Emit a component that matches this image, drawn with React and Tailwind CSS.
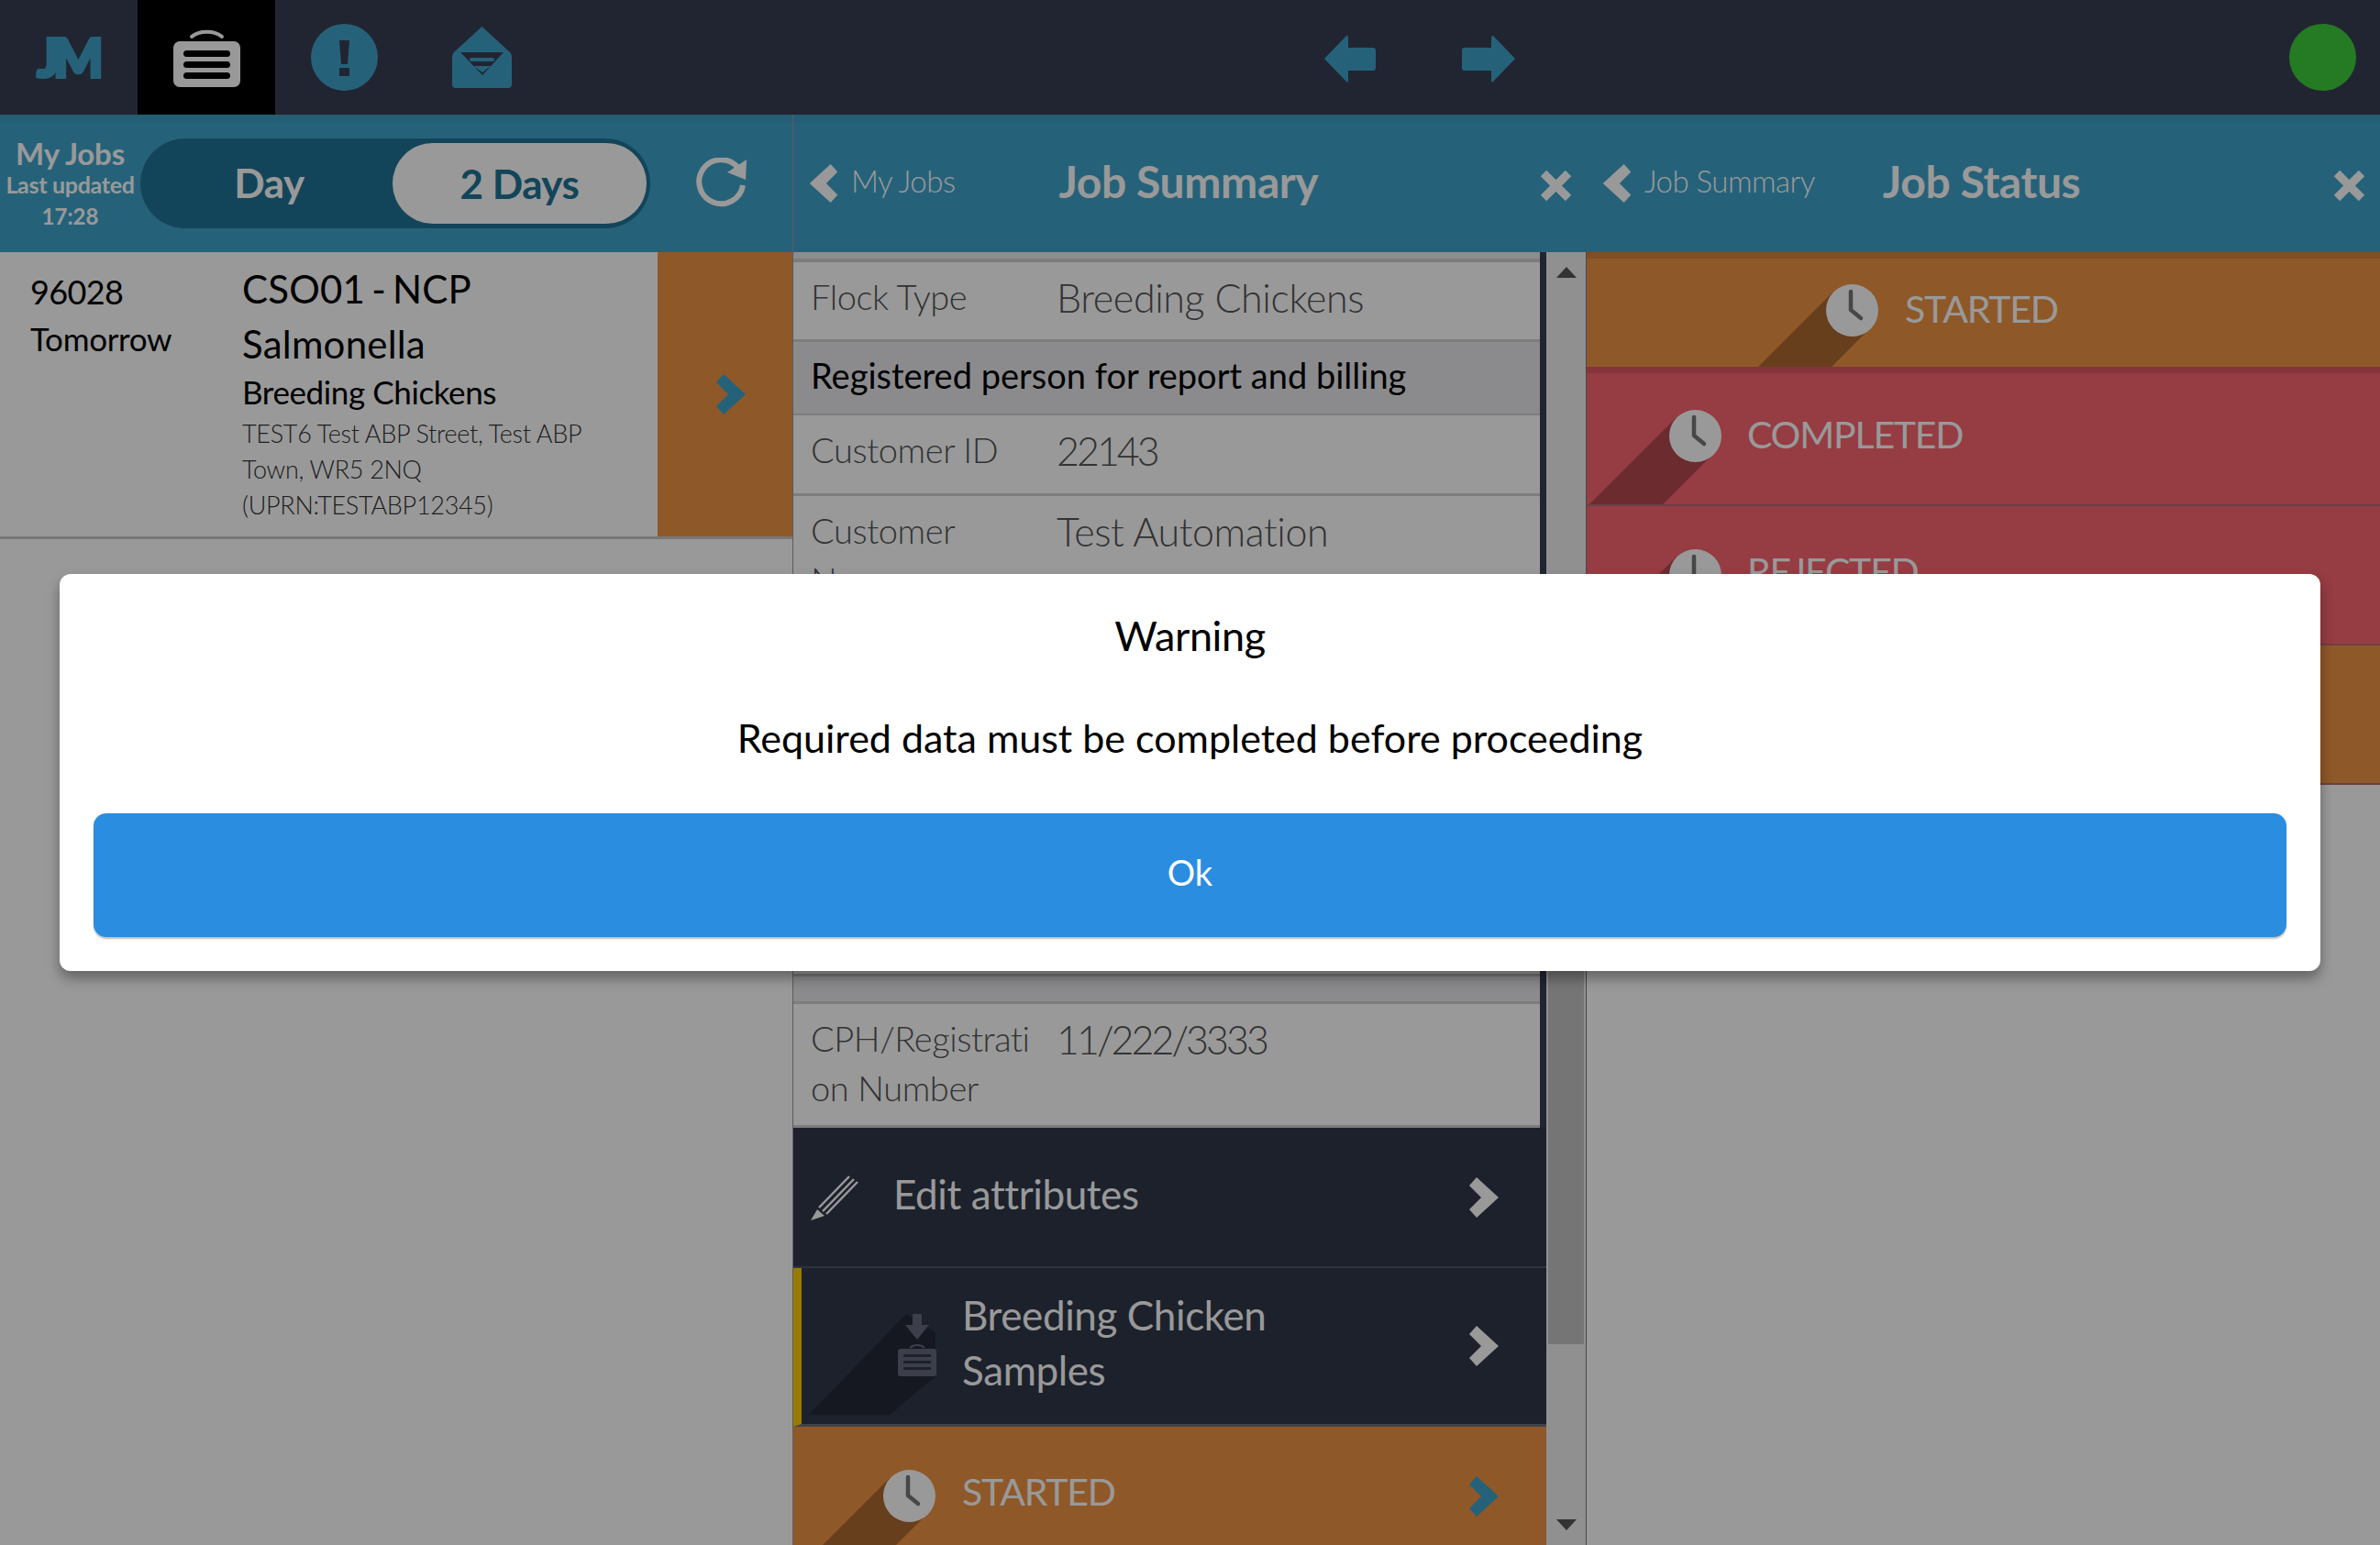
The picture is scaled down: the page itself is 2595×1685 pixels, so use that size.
import React from 'react';

const Chevron = ({ className = 'fill-white', w = 32, h = 44, dir = 'right' }) => (
  <svg width={w} height={h} viewBox="0 0 32 44" className={className}>
    {dir === 'right' ? (
      <polygon points="0,9 8,0 32,22 8,44 0,35 13,22" />
    ) : (
      <polygon points="32,9 24,0 0,22 24,44 32,35 19,22" />
    )}
  </svg>
);

const CloseX = () => (
  <svg width="37" height="35" viewBox="0 0 37 35" className="stroke-white">
    <path d="M5 4 L32 31 M32 4 L5 31" strokeWidth="9" />
  </svg>
);

const Clock = ({ size = 57 }) => (
  <svg width={size} height={size} viewBox="0 0 57 57">
    <circle cx="28.5" cy="28.5" r="28.5" fill="#ffffff" />
    <path d="M27 8 V28 L38 37" fill="none" stroke="#777777" strokeWidth="4.5" strokeLinecap="round" strokeLinejoin="round" />
  </svg>
);

// coloured row with a clock and its long 45deg shadow
const ClockRow = ({ label, cx, cy = 75, h = 150, textX, bg, shadow, top, bottom, children }) => (
  <div className={`relative shrink-0 flex items-center overflow-hidden ${bg} ${top || ''} ${bottom || ''}`} style={{ height: h }}>
    <svg className="absolute left-0 top-0" width="400" height={h}>
      <polygon
        fill={shadow}
        points={`${cx - 20},${cy - 20} ${cx - 20 - (h - cy + 20)},${h} ${cx + 20 - (h - cy - 20)},${h} ${cx + 20},${cy + 20}`}
      />
    </svg>
    <div className="absolute" style={{ left: cx - 28, top: cy - 28 }}>
      <Clock />
    </div>
    <span className="relative text-[41px] leading-none text-white tracking-[-1.2px]" style={{ marginLeft: textX, marginTop: -10 }}>
      {label}
    </span>
    {children}
  </div>
);

const PanelHeader = ({ back, title, titleGap }) => (
  <div className="h-[150px] shrink-0 bg-[#3FA3CB] border-t-[8px] border-[#3C9BC1] flex items-center pb-[8px] relative">
    <div className="ml-[17px] w-[32px] flex">
      <Chevron className="fill-white" dir="left" w={32} h={42} />
    </div>
    <span className="ml-[14px] text-[33px] font-light text-white leading-none tracking-[-0.5px] -mt-[5px]">{back}</span>
    <span className="text-[48px] font-bold text-white leading-none tracking-[-0.4px] -mt-[4px]" style={{ marginLeft: titleGap }}>{title}</span>
    <div className="ml-auto mr-[15px] mt-[4px] flex">
      <CloseX />
    </div>
  </div>
);

const InfoRow = ({ label, value, h = 'h-[88px]', numeric = false }) => (
  <div className={`${h} shrink-0 flex bg-white border-b-[3px] border-[#d0d0d0] pl-[19px] overflow-hidden`}>
    <div className="w-[250px] mr-[20px] shrink-0 text-[38px] font-light text-[#555] leading-[54px] pt-[10px] wrap-anywhere tracking-[-0.4px]">{label}</div>
    <div className={`text-[43px] font-light text-[#555] leading-[53px] pt-[12px] -ml-[2px] ${numeric ? 'tracking-[-3px]' : 'tracking-[-0.4px]'}`}>{value}</div>
  </div>
);

const DarkRow = ({ className, chevronLeft = 737, children }) => (
  <div className={`relative shrink-0 flex items-center bg-[#303749] ${className}`}>
    {children}
    <div className="absolute top-0 h-full flex items-center" style={{ left: chevronLeft }}>
      <Chevron className="fill-white" />
    </div>
  </div>
);

export default function App() {
  return (
    <div className="relative w-[2595px] h-[1685px] overflow-hidden bg-white text-black font-['Lato',sans-serif] flex flex-col">
      {/* top bar */}
      <div className="h-[125px] shrink-0 bg-[#373E53] flex">
        <div className="w-[150px] flex items-center justify-center">
          <span className="text-[57px] font-black leading-none text-[#3FA3CB] tracking-[-7px] pr-[4px] [-webkit-text-stroke:4px_#3FA3CB]">JM</span>
        </div>
        <div className="w-[150px] bg-black flex items-center justify-center">
          <svg width="73" height="64" viewBox="0 0 73 64">
            <path d="M20 9 C 28 2, 45 2, 53 9" fill="none" stroke="#ffffff" strokeWidth="4" strokeLinecap="round" />
            <rect x="0" y="14" width="73" height="50" rx="7" fill="#ffffff" />
            <rect x="11" y="24" width="51" height="7" rx="3.5" fill="#000" />
            <rect x="11" y="36" width="51" height="7" rx="3.5" fill="#000" />
            <rect x="11" y="48" width="51" height="7" rx="3.5" fill="#000" />
          </svg>
        </div>
        <div className="w-[150px] flex items-center justify-center">
          <svg width="73" height="73" viewBox="0 0 73 73">
            <circle cx="36.5" cy="36.5" r="36.5" fill="#3FA3CB" />
            <polygon points="31,18 42,18 40,44 33,44" fill="#373E53" />
            <rect x="31" y="48" width="11" height="9" fill="#373E53" />
          </svg>
        </div>
        <div className="w-[150px] flex items-center justify-center">
          <svg width="65" height="67" viewBox="0 0 65 67">
            <path d="M32.5 0 L63 28 Q65 30 65 33 V63 Q65 67 61 67 H4 Q0 67 0 63 V33 Q0 30 2 28 Z" fill="#3FA3CB" />
            <polygon points="9,28 56,28 33,53" fill="#373E53" />
            <rect x="19" y="34" width="27" height="4" rx="2" fill="#3FA3CB" />
            <polygon points="23,43 42,43 33,50" fill="#3FA3CB" />
          </svg>
        </div>
        <div className="ml-[797px] w-[150px] flex items-center justify-center pt-[4px]">
          <svg width="56" height="51" viewBox="0 0 56 51">
            <path d="M0 25 L24 0 Q26 -1 26 3 V13 H53 Q56 13 56 16 V35 Q56 38 53 38 H26 V48 Q26 52 24 50 Z" fill="#3FA3CB" />
          </svg>
        </div>
        <div className="w-[150px] flex items-center justify-center pt-[3px] pl-[2px]">
          <svg width="58" height="51" viewBox="0 0 58 51">
            <path d="M58 25 L34 0 Q32 -1 32 3 V13 H3 Q0 13 0 16 V35 Q0 38 3 38 H32 V48 Q32 52 34 50 Z" fill="#3FA3CB" />
          </svg>
        </div>
        <div className="ml-auto mr-[26px] self-center w-[73px] h-[73px] rounded-full bg-[#3FCB3C]" />
      </div>

      <div className="flex flex-1 min-h-0">
        {/* My Jobs */}
        <div className="w-[864px] shrink-0 flex flex-col">
          <div className="h-[150px] shrink-0 bg-[#3FA3CB] border-t-[8px] border-[#3C9BC1] flex items-center">
            <div className="w-[153px] shrink-0 flex flex-col items-center text-white font-bold">
              <span className="text-[33px] leading-[36px] tracking-[-0.2px] -mt-[6px]">My Jobs</span>
              <span className="text-[25px] leading-[33px] tracking-[-0.3px]">Last updated</span>
              <span className="text-[24px] leading-[36px]">17:28</span>
            </div>
            <div className="w-[556px] h-[98px] mt-[-8px] rounded-full bg-[#207396] flex items-center pr-[4px]">
              <div className="w-[281px] text-center text-[44px] font-bold leading-none text-white tracking-[-0.5px] pb-[2px]">Day</div>
              <div className="w-[277px] h-[88px] -ml-[6px] rounded-full bg-white flex items-center justify-center text-[44px] font-bold text-[#207396] tracking-[-0.5px]">2 Days</div>
            </div>
            <div className="ml-[50px] mt-[-8px] flex">
              <svg width="56" height="56" viewBox="0 0 56 56">
                <path d="M45 10 A 24 24 0 1 0 51 30" fill="none" stroke="#ffffff" strokeWidth="6" />
                <polygon points="55,2 54,24 34,16" fill="#ffffff" />
              </svg>
            </div>
          </div>
          <div className="h-[313px] shrink-0 flex border-b-[3px] border-[#c8c8c8]">
            <div className="flex-1 flex pl-[33px] pt-[20px]">
              <div className="w-[231px] shrink-0">
                <div className="text-[36px] leading-[46px] tracking-[-0.6px]">96028</div>
                <div className="text-[35px] leading-[46px] mt-[5px] tracking-[-0.3px]">Tomorrow</div>
              </div>
              <div className="flex-1">
                <div className="text-[42px] leading-[60px] tracking-[0.2px] [word-spacing:-4px] w-[300px] -mt-[10px]">CSO01 - NCP Salmonella</div>
                <div className="text-[35px] leading-[50px] tracking-[-0.4px] -mt-[3px]">Breeding Chickens</div>
                <div className="text-[27px] font-light leading-[39px] text-[#333] tracking-[-0.3px] w-[400px] mt-[1px]">
                  TEST6 Test ABP Street, Test ABP Town, WR5 2NQ (UPRN:TESTABP12345)
                </div>
              </div>
            </div>
            <div className="w-[147px] shrink-0 bg-[#EE9344] flex items-center pl-[64px]">
              <Chevron className="fill-[#3FA3CB]" />
            </div>
          </div>
        </div>

        {/* Job Summary */}
        <div className="w-[866px] shrink-0 flex flex-col border-l border-[#999]">
          <PanelHeader back="My Jobs" title="Job Summary" titleGap={113} />
          <div className="flex flex-1 min-h-0 overflow-hidden">
            <div className="w-[821px] shrink-0 flex flex-col bg-[#373E53]">
              <div className="w-[814px] shrink-0 flex flex-col">
                <div className="h-[11px] shrink-0 bg-[#ececec] border-b-[4px] border-[#cfcfcf]" />
                <InfoRow label="Flock Type" value="Breeding Chickens" h="h-[87px]" />
                <div className="h-[80px] shrink-0 bg-[#E8E8EB] border-b-[2px] border-[#d0d0d0] flex items-center pl-[19px] text-[38px] tracking-[0px] leading-none pb-[6px]">
                  Registered person for report and billing
                </div>
                <InfoRow label="Customer ID" value="22143" numeric />
                <InfoRow label="Customer Name" value="Test Automation" h="h-[200px]" />
                <div className="h-[324px] shrink-0 bg-white border-b-[3px] border-[#c4c4c4]" />
                <div className="h-[30px] shrink-0 bg-[#E8E8EB] border-b-[3px] border-[#d0d0d0]" />
                <InfoRow label="CPH/Registration Number" value="11/222/3333" h="h-[135px]" numeric />
              </div>
              <DarkRow className="h-[153px] border-b-[2px] border-[#4e5566]">
                <div className="ml-[19px] flex">
                  <svg width="52" height="50" viewBox="0 0 52 50" fill="none" stroke="#ffffff">
                    <path d="M9 36 L42 2 M13 40 L47 5 M17 43 L51 8" strokeWidth="2.5" />
                    <polygon points="7,38 15,45 0,50" fill="#ffffff" stroke="none" />
                  </svg>
                </div>
                <span className="ml-[38px] text-[44px] leading-none text-white tracking-[-0.4px] pb-[8px]">Edit attributes</span>
              </DarkRow>
              <DarkRow chevronLeft={728} className="h-[173px] border-l-[9px] border-l-[#FFCC00] border-b-[3px] border-b-[#6d6f78]">
                <svg className="absolute left-0 top-0" width="180" height="170">
                  <polygon points="114,50 8,160 96,160 146,118 146,70" fill="#232836" />
                </svg>
                <div className="absolute left-[105px] top-[50px] flex">
                  <svg width="42" height="68" viewBox="0 0 42 68" fill="#656a7c">
                    <polygon points="16,0 26,0 26,12 34,12 21,28 8,12 16,12" />
                    <path d="M13 37 C 17 33, 25 33, 29 37" fill="none" stroke="#656a7c" strokeWidth="2" />
                    <rect x="0" y="38" width="42" height="30" rx="3" />
                    <rect x="6" y="44" width="30" height="3" fill="#303749" />
                    <rect x="6" y="51" width="30" height="3" fill="#303749" />
                    <rect x="6" y="58" width="30" height="3" fill="#303749" />
                  </svg>
                </div>
                <div className="relative ml-[175px] w-[420px] text-[44px] leading-[60px] text-white tracking-[-0.4px] pb-[8px]">
                  Breeding Chicken Samples
                </div>
              </DarkRow>
              <ClockRow label="STARTED" cx={126} cy={75} h={150} textX={184} bg="bg-[#EE9344]" shadow="#AC6A31">
                <div className="absolute left-[737px] top-[54px] flex">
                  <Chevron className="fill-[#3FA3CB]" />
                </div>
              </ClockRow>
            </div>

            {/* scroll bar */}
            <div className="flex-1 flex flex-col items-center bg-[#f0f0f0] border-r border-[#777] px-[2px]">
              <svg className="shrink-0 mt-[16px]" width="22" height="12" viewBox="0 0 22 12">
                <polygon points="11,0 22,12 0,12" fill="#555555" />
              </svg>
              <div className="h-[399px] shrink-0" />
              <div className="h-[764px] w-full shrink-0 bg-[#c3c3c3]" />
              <div className="flex-1" />
              <svg className="shrink-0 mb-[16px]" width="22" height="12" viewBox="0 0 22 12">
                <polygon points="0,0 22,0 11,12" fill="#555555" />
              </svg>
            </div>
          </div>
        </div>

        {/* Job Status */}
        <div className="flex-1 min-w-0 flex flex-col">
          <PanelHeader back="Job Summary" title="Job Status" titleGap={74} />
          <ClockRow label="STARTED" cx={289} cy={56} h={118} textX={347} bg="bg-[#EE9344]" shadow="#AC6A31" top="box-content border-t-[7px] border-[#D4823C]" />
          <ClockRow label="COMPLETED" cx={118} cy={68} h={143} textX={175} bg="bg-[#FA6470]" shadow="#B4484F" top="box-content border-t-[7px] border-[#DE5862]" />
          <ClockRow label="REJECTED" cx={118} cy={75} h={150} textX={175} bg="bg-[#FA6470]" shadow="#B4484F" top="box-content border-t-[2px] border-[#B86A73]" />
          <ClockRow label="" cx={118} cy={75} h={150} textX={175} bg="bg-[#EE9344]" shadow="#AC6A31" top="box-content border-y-[2px] border-[#B86A73]" />
        </div>
      </div>

      {/* dim layer + warning dialog */}
      <div className="absolute inset-0 bg-black/40 pt-[626px] px-[65px]">
        <div className="w-[2465px] h-[433px] bg-white rounded-[12px] shadow-[0_8px_14px_rgba(0,0,0,0.35)] px-[37px] flex flex-col items-center">
          <div className="mt-[43px] text-[45px] leading-[48px] tracking-[-0.4px]">Warning</div>
          <div className="mt-[64px] text-[43px] leading-[48px]">Required data must be completed before proceeding</div>
          <button className="mt-[58px] w-full h-[135px] shrink-0 rounded-[14px] bg-[#2A8DE0] text-white text-[38px] pb-[6px] shadow-[0_2px_2px_rgba(0,0,0,0.25)]">Ok</button>
        </div>
      </div>
    </div>
  );
}
